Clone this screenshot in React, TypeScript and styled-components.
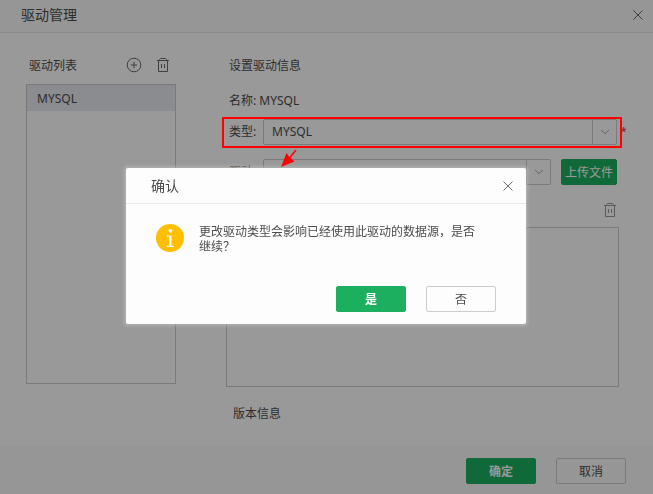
import React from "react";
import styled, { createGlobalStyle } from "styled-components";

const GlobalStyle = createGlobalStyle`
  *, *::before, *::after { box-sizing: border-box; }
  body { margin: 0; background: #fff; }
  body, button, select, input {
    font-family: "Noto Sans", "Noto Sans CJK SC", sans-serif;
    font-size: 12px;
    line-height: 16px;
    color: #4c4c4c;
  }
  h1, h2, p, ul { margin: 0; padding: 0; font-weight: 400; }
`;

const Window = styled.div`
  display: flex;
  flex-direction: column;
  min-height: 100vh;
  background: #fff;
`;

const TitleBar = styled.header<{ $height: number; $left: number; $right: number }>`
  display: flex;
  align-items: center;
  justify-content: space-between;
  height: ${(p) => p.$height}px;
  padding: 0 ${(p) => p.$right}px 0 ${(p) => p.$left}px;
  border-bottom: 1px solid #e8e8e8;
`;

const WindowBar = styled(TitleBar)`
  padding-bottom: 2px;
  background: #fbfbfb;
`;

const Title = styled.h1`
  font-size: 14px;
  line-height: 20px;
`;

const IconButton = styled.button`
  display: grid;
  place-items: center;
  width: 16px;
  height: 16px;
  padding: 0;
  border: 0;
  background: none;
  color: #6a6a6a;
  cursor: pointer;
`;

const Content = styled.main`
  flex: 1;
  display: grid;
  grid-template-columns: 150px 1fr;
  gap: 50px;
  padding: 24px 34px 24px 26px;
`;

const Column = styled.section`
  display: flex;
  flex-direction: column;
  min-width: 0;
`;

const Toolbar = styled.div`
  display: flex;
  align-items: flex-start;
  gap: 13px;
  height: 18px;
  padding: 0 5px 0 3px;
`;

const FileToolbar = styled.div`
  display: flex;
  align-items: center;
  justify-content: flex-end;
  height: 42px;
  padding: 8px 1px 0 0;
  color: #999;
`;

const FileRemoveButton = styled(IconButton)`
  color: #999;
`;

const ToolbarTitle = styled.h2`
  flex: 1;
  font-size: 12px;
  line-height: 18px;
`;

const DriverList = styled.ul`
  height: 300px;
  margin-top: 9px;
  border: 1px solid #ccc;
  list-style: none;
`;

const DriverItem = styled.li`
  padding: 6px 10px 4px;
  background: #e6eaef;
`;

const FieldRow = styled.div<{ $top: number }>`
  position: relative;
  display: flex;
  align-items: center;
  min-height: 26px;
  margin-top: ${(p) => p.$top}px;
  padding: 0 2px 0 3px;
`;

const FieldLabel = styled.label`
  width: 34px;
`;

const SelectBox = styled.div`
  flex: 1;
  display: grid;
  grid-template-columns: 1fr 24px;
  height: 26px;
  border: 1px solid #ccc;
  border-radius: 2px;
`;

const SelectInput = styled.select`
  grid-area: 1 / 1 / 2 / 3;
  appearance: none;
  width: 100%;
  padding: 0 28px 0 8px;
  border: 0;
  background: none;
`;

const Arrow = styled.span`
  grid-area: 1 / 2 / 2 / 3;
  display: grid;
  place-items: center;
  border-left: 1px solid #ccc;
  color: #aaa;
  pointer-events: none;
`;

const Required = styled.span`
  position: absolute;
  left: calc(100% + 2px);
  top: 4px;
  font-size: 10px;
  color: #e02020;
`;

const Button = styled.button<{ $primary?: boolean; $wide?: boolean }>`
  width: ${(p) => (p.$wide ? 70 : 56)}px;
  height: 26px;
  padding: 2px 0 0;
  border: 1px solid ${(p) => (p.$primary ? "#1caf5f" : "#ccc")};
  border-radius: 2px;
  background: ${(p) => (p.$primary ? "#1caf5f" : "transparent")};
  color: ${(p) => (p.$primary ? "#fff" : "#4c4c4c")};
  font-weight: ${(p) => (p.$primary && p.$wide ? 700 : 400)};
  cursor: pointer;
`;

const UploadButton = styled(Button)`
  margin-left: 10px;
`;

const FileList = styled.div`
  height: 160px;
  border: 1px solid #ccc;
`;

const VersionInfo = styled.p`
  margin-top: 19px;
  padding-left: 7px;
`;

const Actions = styled.div<{ $inset: number }>`
  display: flex;
  justify-content: flex-end;
  gap: 20px;
  padding: 0 ${(p) => p.$inset}px;
`;

const WindowFooter = styled.footer`
  padding: 12px 0 10px;
  background: #fbfbfb;
`;

const Highlight = styled.span`
  position: absolute;
  z-index: 3;
  inset: -2px -3px -3px -4px;
  border: 2px solid #f00;
  pointer-events: none;
`;

const Pointer = styled.svg`
  position: absolute;
  z-index: 5;
  left: 54px;
  top: 30px;
  pointer-events: none;
`;

const Backdrop = styled.div`
  position: fixed;
  z-index: 2;
  inset: 0;
  background: rgba(0, 0, 0, 0.4);
`;

const DialogLayer = styled.div`
  position: fixed;
  z-index: 4;
  inset: 0;
  display: flex;
  align-items: center;
  justify-content: center;
  padding: 0 1px 2px 0;
`;

const Dialog = styled.div`
  width: 400px;
  padding-bottom: 12px;
  border-radius: 2px;
  background: #fdfdfd;
  box-shadow: 0 0 3px 2px rgba(190, 190, 190, 0.6);
`;

const Message = styled.div`
  display: flex;
  gap: 15px;
  min-height: 82px;
  padding: 20px 48px 0 30px;
`;

const MessageText = styled.p`
  line-height: 15px;
`;

const InfoMark = styled.svg`
  flex: none;
`;

const CloseIcon = () => (
  <svg width="12" height="12" viewBox="0 0 12 12" fill="none" stroke="currentColor">
    <path d="M1.5 1.5l9 9M10.5 1.5l-9 9" />
  </svg>
);

const PlusIcon = () => (
  <svg width="16" height="16" viewBox="0 0 16 16" fill="none" stroke="currentColor">
    <circle cx="8" cy="8" r="6.8" />
    <path d="M8 4.8v6.4M4.8 8h6.4" />
  </svg>
);

const TrashIcon = () => (
  <svg width="16" height="16" viewBox="0 0 16 16" fill="none" stroke="currentColor">
    <path d="M2 3.5h12M4.5 3.5v-1l1-1h5l1 1v1M3.5 3.5v11h9v-11M6.5 7v4M9.5 7v4" />
  </svg>
);

const ChevronIcon = () => (
  <svg width="10" height="6" viewBox="0 0 10 6" fill="none" stroke="currentColor">
    <path d="M1 1l4 3.5L9 1" />
  </svg>
);

const InfoIcon = () => (
  <InfoMark width="28" height="28" viewBox="0 0 28 28" aria-hidden="true">
    <circle cx="14" cy="14" r="14" fill="#ffbe00" />
    <circle cx="14.5" cy="6.8" r="1.9" fill="#fff" />
    <path d="M11 11.5h4.5v10.2H18v1.3h-7.3v-1.3h2.6v-8.9H11z" fill="#fff" />
  </InfoMark>
);

type SelectProps = { id: string; options: string[] };

const Select = ({ id, options }: SelectProps) => (
  <SelectBox>
    <SelectInput id={id}>
      {options.map((o) => (
        <option key={o}>{o}</option>
      ))}
    </SelectInput>
    <Arrow>
      <ChevronIcon />
    </Arrow>
  </SelectBox>
);

export default function App() {
  return (
    <>
      <GlobalStyle />
      <Window>
        <WindowBar $height={33} $left={21} $right={7}>
          <Title>驱动管理</Title>
          <IconButton aria-label="关闭">
            <CloseIcon />
          </IconButton>
        </WindowBar>
        <Content>
          <Column>
            <Toolbar>
              <ToolbarTitle>驱动列表</ToolbarTitle>
              <IconButton aria-label="新增">
                <PlusIcon />
              </IconButton>
              <IconButton aria-label="删除">
                <TrashIcon />
              </IconButton>
            </Toolbar>
            <DriverList>
              <DriverItem>MYSQL</DriverItem>
            </DriverList>
          </Column>
          <Column>
            <Toolbar>
              <ToolbarTitle>设置驱动信息</ToolbarTitle>
            </Toolbar>
            <FieldRow $top={13}>名称: MYSQL</FieldRow>
            <FieldRow $top={5}>
              <FieldLabel htmlFor="type">类型:</FieldLabel>
              <Select id="type" options={["MYSQL"]} />
              <Required>*</Required>
              <Highlight />
              <Pointer width="18" height="20" viewBox="0 0 18 20" aria-hidden="true">
                <path d="M16 1L10 8.5" stroke="#f00" strokeWidth="1.5" />
                <path d="M1 18L6.5 4L9 7.5L14.5 12.5z" fill="#f00" />
              </Pointer>
            </FieldRow>
            <FieldRow $top={14}>
              <FieldLabel htmlFor="driver">驱动:</FieldLabel>
              <Select id="driver" options={[""]} />
              <UploadButton $primary>上传文件</UploadButton>
            </FieldRow>
            <FileToolbar>
              <FileRemoveButton aria-label="删除文件">
                <TrashIcon />
              </FileRemoveButton>
            </FileToolbar>
            <FileList />
            <VersionInfo>版本信息</VersionInfo>
          </Column>
        </Content>
        <WindowFooter>
          <Actions $inset={27}>
            <Button $primary $wide>
              确定
            </Button>
            <Button $wide>取消</Button>
          </Actions>
        </WindowFooter>
      </Window>
      <Backdrop />
      <DialogLayer>
        <Dialog role="dialog" aria-modal="true" aria-labelledby="confirm-title">
          <TitleBar $height={36} $left={25} $right={10}>
            <Title as="h2" id="confirm-title">
              确认
            </Title>
            <IconButton aria-label="关闭">
              <CloseIcon />
            </IconButton>
          </TitleBar>
          <Message>
            <InfoIcon />
            <MessageText>更改驱动类型会影响已经使用此驱动的数据源，是否继续？</MessageText>
          </Message>
          <Actions $inset={30}>
            <Button $primary $wide>
              是
            </Button>
            <Button $wide>否</Button>
          </Actions>
        </Dialog>
      </DialogLayer>
    </>
  );
}
